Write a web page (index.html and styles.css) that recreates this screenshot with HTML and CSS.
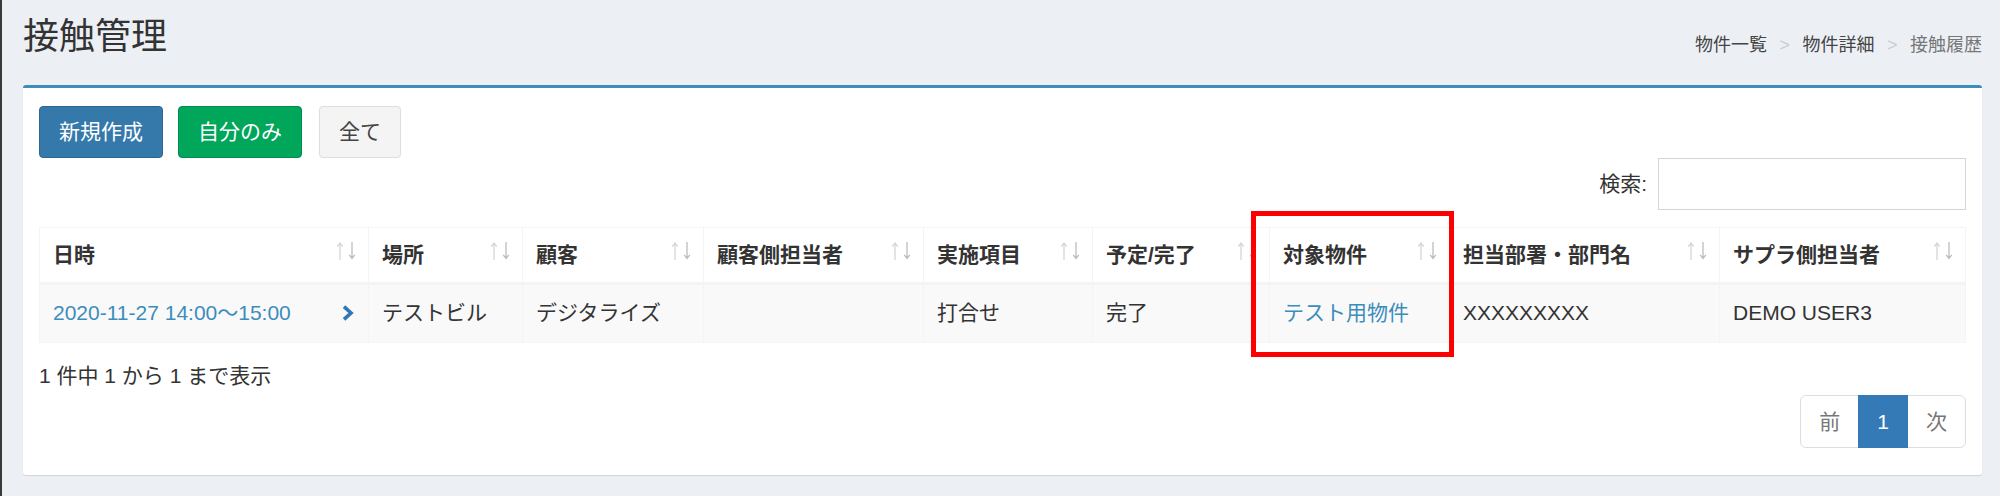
FILE: index.html
```html
<!DOCTYPE html>
<html lang="ja">
<head>
<meta charset="utf-8">
<title>接触管理</title>
<link rel="stylesheet" href="styles.css">
</head>
<body>
<div class="page">
  <header class="content-header">
    <h1 class="title">接触管理</h1>
    <ol class="breadcrumb">
      <li><a href="#">物件一覧</a></li>
      <li><a href="#">物件詳細</a></li>
      <li class="active">接触履歴</li>
    </ol>
  </header>

  <section class="box">
    <div class="toolbar">
      <button class="btn btn-primary">新規作成</button>
      <button class="btn btn-success">自分のみ</button>
      <button class="btn btn-default">全て</button>
    </div>

    <div class="filter">
      <label class="filter-label">検索:</label>
      <input class="filter-input" type="search">
    </div>

    <table class="grid">
      <colgroup>
        <col class="c1"><col class="c2"><col class="c3"><col class="c4"><col class="c5"><col class="c6"><col class="c7"><col class="c8"><col class="c9">
      </colgroup>
      <thead>
        <tr>
          <th>日時<svg class="sort" width="20" height="20" viewBox="0 0 20 20"><path class="up" d="M3 2.5V19M0.2 5.6L3 2 5.8 5.6"/><path class="down" d="M15 1V17.5M12.2 13.9L15 17.5 17.8 13.9"/></svg></th>
          <th>場所<svg class="sort" width="20" height="20" viewBox="0 0 20 20"><path class="up" d="M3 2.5V19M0.2 5.6L3 2 5.8 5.6"/><path class="down" d="M15 1V17.5M12.2 13.9L15 17.5 17.8 13.9"/></svg></th>
          <th>顧客<svg class="sort" width="20" height="20" viewBox="0 0 20 20"><path class="up" d="M3 2.5V19M0.2 5.6L3 2 5.8 5.6"/><path class="down" d="M15 1V17.5M12.2 13.9L15 17.5 17.8 13.9"/></svg></th>
          <th>顧客側担当者<svg class="sort" width="20" height="20" viewBox="0 0 20 20"><path class="up" d="M3 2.5V19M0.2 5.6L3 2 5.8 5.6"/><path class="down" d="M15 1V17.5M12.2 13.9L15 17.5 17.8 13.9"/></svg></th>
          <th>実施項目<svg class="sort" width="20" height="20" viewBox="0 0 20 20"><path class="up" d="M3 2.5V19M0.2 5.6L3 2 5.8 5.6"/><path class="down" d="M15 1V17.5M12.2 13.9L15 17.5 17.8 13.9"/></svg></th>
          <th>予定/完了<svg class="sort" width="20" height="20" viewBox="0 0 20 20"><path class="up" d="M3 2.5V19M0.2 5.6L3 2 5.8 5.6"/><path class="down" d="M15 1V17.5M12.2 13.9L15 17.5 17.8 13.9"/></svg></th>
          <th>対象物件<svg class="sort" width="20" height="20" viewBox="0 0 20 20"><path class="up" d="M3 2.5V19M0.2 5.6L3 2 5.8 5.6"/><path class="down" d="M15 1V17.5M12.2 13.9L15 17.5 17.8 13.9"/></svg></th>
          <th>担当部署・部門名<svg class="sort" width="20" height="20" viewBox="0 0 20 20"><path class="up" d="M3 2.5V19M0.2 5.6L3 2 5.8 5.6"/><path class="down" d="M15 1V17.5M12.2 13.9L15 17.5 17.8 13.9"/></svg></th>
          <th>サプラ側担当者<svg class="sort" width="20" height="20" viewBox="0 0 20 20"><path class="up" d="M3 2.5V19M0.2 5.6L3 2 5.8 5.6"/><path class="down" d="M15 1V17.5M12.2 13.9L15 17.5 17.8 13.9"/></svg></th>
        </tr>
      </thead>
      <tbody>
        <tr>
          <td><div class="date-cell"><a href="#">2020-11-27 14:00～15:00</a><svg class="chevron" width="14" height="16" viewBox="0 0 14 16"><path d="M3 1.6L10 8 3 14.4"/></svg></div></td>
          <td>テストビル</td>
          <td>デジタライズ</td>
          <td></td>
          <td>打合せ</td>
          <td>完了</td>
          <td><a href="#">テスト用物件</a></td>
          <td>XXXXXXXXX</td>
          <td>DEMO USER3</td>
        </tr>
      </tbody>
    </table>

    <div class="info">1 件中 1 から 1 まで表示</div>

    <ul class="pagination">
      <li class="disabled"><a href="#">前</a></li>
      <li class="active"><a href="#">1</a></li>
      <li class="disabled"><a href="#">次</a></li>
    </ul>
  </section>

  <div class="highlight"></div>
</div>
</body>
</html>
```

FILE: styles.css
```css
html, body {
  margin: 0;
  padding: 0;
}

body {
  background: #ecf0f5;
  border-left: 2px solid #3a3a3a;
  min-height: 496px;
  font-family: "Liberation Sans", "Noto Sans CJK JP", sans-serif;
  font-size: 21px;
  line-height: 30px;
  color: #333;
}

a {
  color: #3c8dbc;
  text-decoration: none;
}

.page {
  position: relative;
  padding: 0 18px 21px 21px;
}

/* header */
.content-header {
  display: flex;
  justify-content: space-between;
  align-items: flex-start;
  padding-top: 17px;
}

.title {
  margin: 0;
  font-size: 36px;
  line-height: 40px;
  font-weight: 400;
  color: #333;
}

.breadcrumb {
  list-style: none;
  margin: 15px 0 0;
  padding: 0;
  font-size: 18px;
  line-height: 26px;
}

.breadcrumb li {
  display: inline-block;
  color: #777;
}

.breadcrumb li a {
  color: #444;
}

.breadcrumb li + li::before {
  content: ">\00a0";
  padding: 0 7.5px;
  color: #ccc;
}

/* box */
.box {
  margin-top: 27px;
  background: #fff;
  border-top: 3px solid #3c8dbc;
  border-radius: 3px;
  box-shadow: 0 1px 1px rgba(0, 0, 0, 0.12);
  padding: 18px 16px 27px;
}

.toolbar {
  display: flex;
  gap: 15px;
}

.btn {
  font-family: inherit;
  font-size: 21px;
  line-height: 30px;
  padding: 10px 19px;
  border: 1px solid transparent;
  border-radius: 4px;
  cursor: pointer;
}

.btn-primary {
  background: #3579ab;
  border-color: #2c6794;
  color: #fff;
}

.btn-success {
  background: #00a65a;
  border-color: #008d4c;
  color: #fff;
  margin-right: 2px;
}

.btn-default {
  background: #f4f4f4;
  border-color: #ddd;
  color: #444;
}

/* filter */
.filter {
  display: flex;
  justify-content: flex-end;
  align-items: center;
}

.filter-label {
  font-size: 21px;
  color: #333;
}

.filter-input {
  box-sizing: border-box;
  width: 308px;
  height: 52px;
  margin-left: 11px;
  border: 1px solid #d2d6de;
  background: #fff;
  font-family: inherit;
  font-size: 21px;
  padding: 0 12px;
}

/* table */
.grid {
  margin-top: 17px;
  width: 1927px;
  table-layout: fixed;
  border-collapse: separate;
  border-spacing: 0;
  border-top: 1px solid #f4f4f4;
  border-left: 1px solid #f4f4f4;
}

.c1 { width: 329px; }
.c2 { width: 154px; }
.c3 { width: 181px; }
.c4 { width: 220px; }
.c5 { width: 169px; }
.c6 { width: 177px; }
.c7 { width: 180px; }
.c8 { width: 270px; }
.c9 { width: 246px; }

.grid th,
.grid td {
  border-right: 1px solid #f4f4f4;
  text-align: left;
  white-space: nowrap;
  overflow: hidden;
}

.grid th {
  position: relative;
  font-weight: 700;
  color: #333;
  padding: 12px 45px 12px 13px;
  border-bottom: 3px solid #f4f4f4;
  background: #fff;
}

.grid td {
  padding: 13px 12px 14px 13px;
  border-bottom: 1px solid #f4f4f4;
  background: #f9f9f9;
}

.sort {
  position: absolute;
  top: 13px;
  right: 11px;
  fill: none;
  stroke-width: 1.3;
}

.sort .up {
  stroke: #d6d6d6;
}

.sort .down {
  stroke: #bdbdbd;
}

.date-cell {
  display: flex;
  justify-content: space-between;
  align-items: center;
}

.chevron {
  fill: none;
  stroke: #2f78b4;
  stroke-width: 3.6;
  margin-right: 1px;
}

/* footer */
.info {
  margin-top: 18px;
}

.pagination {
  list-style: none;
  margin: 4px 0 0;
  padding: 0;
  display: flex;
  justify-content: flex-end;
}

.pagination li a {
  display: block;
  padding: 11px 18px 10px;
  line-height: 30px;
  border: 1px solid #ddd;
  margin-left: -1px;
  background: #fff;
  color: #777;
}

.pagination li:first-child a {
  border-radius: 6px 0 0 6px;
}

.pagination li:last-child a {
  border-radius: 0 6px 6px 0;
}

.pagination li.active a {
  background: #337ab7;
  border-color: #337ab7;
  color: #fff;
  position: relative;
}

/* annotation overlay */
.highlight {
  position: absolute;
  left: 1249px;
  top: 211px;
  width: 203px;
  height: 146px;
  box-sizing: border-box;
  border: 5px solid #ff0000;
  pointer-events: none;
}
```
